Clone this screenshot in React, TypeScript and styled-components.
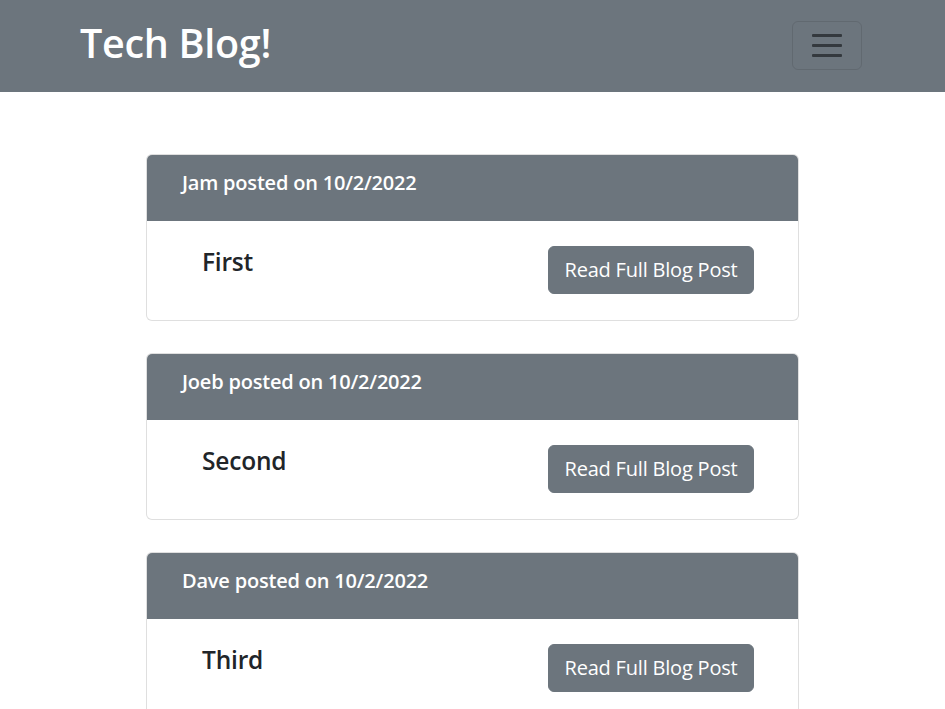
import * as React from 'react';
import styled, { createGlobalStyle } from 'styled-components';

const GlobalStyle = createGlobalStyle`
  body {
    margin: 0;
    background: #fff;
    font-family: "Open Sans", "Noto Sans", sans-serif;
    color: #212529;
  }
`;

const SECONDARY = '#6c757d';

const Navbar = styled.nav`
  height: 92px;
  background: ${SECONDARY};
  display: flex;
  align-items: center;
  justify-content: space-between;
  padding: 0 83px 0 80px;
  box-sizing: border-box;
`;

const Brand = styled.h1`
  margin: 0 0 7px;
  font-size: 39.5px;
  font-weight: 600;
  color: #fff;
  letter-spacing: -0.3px;
`;

const Toggler = styled.button`
  width: 70px;
  height: 49px;
  margin-top: -2px;
  border: 1px solid rgba(0, 0, 0, 0.1);
  border-radius: 6px;
  background: transparent;
  display: flex;
  flex-direction: column;
  align-items: center;
  justify-content: center;
  gap: 7px;
  padding: 0;
`;

const TogglerLine = styled.span`
  display: block;
  width: 30px;
  height: 3px;
  border-radius: 1px;
  background: rgba(33, 37, 41, 0.75);
`;

const Feed = styled.main`
  width: 653px;
  margin: 62px auto 0;
  display: flex;
  flex-direction: column;
  gap: 32px;
`;

const Card = styled.article`
  border: 1px solid rgba(0, 0, 0, 0.125);
  border-radius: 6px;
  overflow: hidden;
  background: #fff;
`;

const CardHeader = styled.header`
  height: 66px;
  background: ${SECONDARY};
  color: #fff;
  padding: 14px 0 0 35px;
  box-sizing: border-box;
  font-size: 20px;
  font-weight: 600;
  letter-spacing: -0.2px;
`;

const CardBody = styled.div`
  height: 99px;
  display: flex;
  align-items: flex-start;
  justify-content: space-between;
  padding: 25px 44px 0 55px;
  box-sizing: border-box;
`;

const PostTitle = styled.h3`
  margin: 0;
  font-size: 24.5px;
  font-weight: 600;
  line-height: 1.3;
  color: #212529;
  letter-spacing: -0.2px;
`;

const ReadButton = styled.button`
  height: 48px;
  width: 206px;
  border: 1px solid ${SECONDARY};
  border-radius: 6px;
  background: ${SECONDARY};
  color: #fff;
  font-family: inherit;
  font-size: 20px;
  letter-spacing: -0.2px;
  padding: 0 0 2px;
  white-space: nowrap;
`;

interface IPost {
  author: string;
  date: string;
  title: string;
}

const posts: IPost[] = [
  { author: 'Jam', date: '10/2/2022', title: 'First' },
  { author: 'Joeb', date: '10/2/2022', title: 'Second' },
  { author: 'Dave', date: '10/2/2022', title: 'Third' },
];

const PostCard: React.FC<IPost> = (props) => (
  <Card>
    <CardHeader>
      {props.author} posted on {props.date}
    </CardHeader>
    <CardBody>
      <PostTitle>{props.title}</PostTitle>
      <ReadButton>Read Full Blog Post</ReadButton>
    </CardBody>
  </Card>
);

const App: React.FC = () => (
  <>
    <GlobalStyle />
    <Navbar>
      <Brand>Tech Blog!</Brand>
      <Toggler aria-label="Toggle navigation">
        <TogglerLine />
        <TogglerLine />
        <TogglerLine />
      </Toggler>
    </Navbar>
    <Feed>
      {posts.map((post) => (
        <PostCard key={post.author} {...post} />
      ))}
    </Feed>
  </>
);

export default App;
